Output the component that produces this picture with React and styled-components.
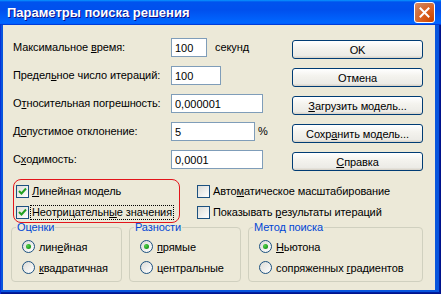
import React from 'react';
import styled, { createGlobalStyle } from 'styled-components';

const GlobalStyle = createGlobalStyle`
  html, body {
    margin: 0;
    padding: 0;
    background: #ece9d8;
  }
  * {
    box-sizing: border-box;
  }
`;

const Window = styled.div`
  width: 441px;
  height: 294px;
  display: flex;
  flex-direction: column;
  background: #0855dd;
  box-shadow: inset 1px 0 #0831d9, inset -1px -1px #00138c, inset -2px -2px #001ea0;
  font-family: 'Liberation Sans', Arial, sans-serif;
  font-size: 11px;
  letter-spacing: -0.1px;
  color: #000;
  overflow: hidden;
`;

const TitleBar = styled.div`
  height: 25px;
  flex-shrink: 0;
  display: flex;
  align-items: center;
  justify-content: space-between;
  padding: 0 6px 0 7px;
  background: linear-gradient(180deg, #0997ff 0%, #0053ee 8%, #0050ee 40%, #0066ff 88%, #0066ff 93%, #005bff 95%, #003dd7 96%, #003dd7 100%);
`;

const Title = styled.span`
  color: #fff;
  font-family: 'Liberation Sans', Arial, sans-serif;
  font-weight: bold;
  font-size: 13px;
  letter-spacing: 0;
  text-shadow: 1px 1px #0f1089;
`;

const CloseButton = styled.div`
  width: 21px;
  height: 21px;
  border: 1px solid #fff;
  border-radius: 3px;
  background: radial-gradient(circle at 90% 90%, #cc4600 0%, #dc6527 55%, #cd7546 70%, #e28a60 100%);
  display: flex;
  align-items: center;
  justify-content: center;
`;

const Client = styled.div`
  flex: 1;
  margin: 0 6px 4px 3px;
  background: #ece9d8;
  padding: 13px 12px 0 10px;
  display: flex;
  flex-direction: column;
`;

const FormGrid = styled.div`
  display: grid;
  grid-template-columns: 158px 1fr 131px;
  grid-auto-rows: 21px;
  row-gap: 7px;
`;

const FieldLabel = styled.label`
  display: block;
  height: 19px;
  line-height: 19px;
  white-space: nowrap;
`;

const FieldCell = styled.div`
  display: flex;
  align-items: flex-start;
  gap: ${p => p.$gap || 0}px;
`;

const Suffix = styled.span`
  height: 19px;
  line-height: 19px;
`;

const TextInput = styled.input`
  width: ${p => p.$w}px;
  height: 19px;
  border: 1px solid #7f9db9;
  background: #fff;
  padding: 0 3px;
  font-family: 'Liberation Sans', Arial, sans-serif;
  font-size: 11px;
  color: #000;
  outline: none;
`;

const Button = styled.button`
  height: 19px;
  margin-top: 2px;
  width: 131px;
  padding: 0;
  border: 1px solid #003c74;
  border-radius: 3px;
  background: linear-gradient(180deg, #fff 0%, #f4f3ee 40%, #ecebe6 86%, #d6d0c5 100%);
  font-family: 'Liberation Sans', Arial, sans-serif;
  font-size: 11px;
  letter-spacing: -0.1px;
  color: #000;
`;

const ChecksRow = styled.div`
  display: flex;
  margin-top: 8px;
`;

const Highlight = styled.div`
  width: 167px;
  border: 1px solid #e3151b;
  border-radius: 8px;
  padding: 4px 2px 2px 2px;
  display: flex;
  flex-direction: column;
  gap: 6px;
`;

const RightChecks = styled.div`
  margin-left: 17px;
  padding-top: 5px;
  display: flex;
  flex-direction: column;
  gap: 6px;
`;

const CheckRow = styled.div`
  height: 15px;
  display: flex;
  align-items: center;
`;

const Box = styled.span`
  width: 13px;
  height: 13px;
  flex-shrink: 0;
  border: 1px solid #1c5180;
  background: linear-gradient(135deg, #dcdcd7 0%, #fff 100%);
  display: flex;
  align-items: center;
  justify-content: center;
`;

const CheckText = styled.span`
  margin-left: 1px;
  padding: 0 1px;
  border: 1px dotted ${p => (p.$focus ? '#000' : 'transparent')};
  line-height: 13px;
  white-space: nowrap;
`;

const Groups = styled.div`
  display: flex;
  gap: 7px;
  margin: -2px 0 0 -2px;
`;

const Group = styled.fieldset`
  width: ${p => p.$w}px;
  margin: 0;
  padding: 5px 0 6px 10px;
  border: 1px solid #d0d0bf;
  border-radius: 4px;
  display: flex;
  flex-direction: column;
  gap: 6px;
`;

const Legend = styled.legend`
  margin-left: -6px;
  padding: 0 1px;
  color: #0046d5;
  line-height: 13px;
`;

const RadioRow = styled.div`
  height: 15px;
  display: flex;
  align-items: center;
  gap: 4px;
  white-space: nowrap;
`;

const Radio = styled.span`
  width: 13px;
  height: 13px;
  flex-shrink: 0;
  border-radius: 50%;
  border: 1px solid #1c5180;
  background: linear-gradient(135deg, #dcdcd7 0%, #fff 100%);
  display: flex;
  align-items: center;
  justify-content: center;

  &::after {
    content: '';
    display: ${p => (p.$on ? 'block' : 'none')};
    width: 5px;
    height: 5px;
    border-radius: 50%;
    background: radial-gradient(circle at 35% 35%, #55d34a 0%, #21a121 60%, #1a7f1a 100%);
  }
`;

const Check = () => (
  <svg width="9" height="9" viewBox="0 0 9 9">
    <path d="M1 4 L3.5 6.5 L8 1.5" fill="none" stroke="#21a121" strokeWidth="2" />
  </svg>
);

const CheckBox = ({ checked, focus, children }) => (
  <CheckRow>
    <Box>{checked && <Check />}</Box>
    <CheckText $focus={focus}>{children}</CheckText>
  </CheckRow>
);

const RadioItem = ({ on, children }) => (
  <RadioRow>
    <Radio $on={on} />
    <span>{children}</span>
  </RadioRow>
);

export default function App() {
  return (
    <>
      <GlobalStyle />
      <Window>
        <TitleBar>
          <Title>Параметры поиска решения</Title>
          <CloseButton>
            <svg width="11" height="11" viewBox="0 0 11 11">
              <path d="M1.5 1.5 L9.5 9.5 M9.5 1.5 L1.5 9.5" stroke="#fff" strokeWidth="2" strokeLinecap="square" />
            </svg>
          </CloseButton>
        </TitleBar>
        <Client>
          <FormGrid>
            <FieldLabel>Максимальное <u>в</u>ремя:</FieldLabel>
            <FieldCell $gap={8}>
              <TextInput $w={36} defaultValue="100" />
              <Suffix>секунд</Suffix>
            </FieldCell>
            <Button>OK</Button>

            <FieldLabel>Предел<u>ь</u>ное число итераций:</FieldLabel>
            <FieldCell>
              <TextInput $w={50} defaultValue="100" />
            </FieldCell>
            <Button>Отмена</Button>

            <FieldLabel>О<u>т</u>носительная погрешность:</FieldLabel>
            <FieldCell>
              <TextInput $w={92} defaultValue="0,000001" />
            </FieldCell>
            <Button><u>З</u>агрузить модель...</Button>

            <FieldLabel>Д<u>о</u>пустимое отклонение:</FieldLabel>
            <FieldCell $gap={3}>
              <TextInput $w={84} defaultValue="5" />
              <Suffix>%</Suffix>
            </FieldCell>
            <Button>Сохр<u>а</u>нить модель...</Button>

            <FieldLabel>С<u>х</u>одимость:</FieldLabel>
            <FieldCell>
              <TextInput $w={92} defaultValue="0,0001" />
            </FieldCell>
            <Button><u>С</u>правка</Button>
          </FormGrid>

          <ChecksRow>
            <Highlight>
              <CheckBox checked><u>Л</u>инейная модель</CheckBox>
              <CheckBox checked focus>Неотрицательн<u>ы</u>е значения</CheckBox>
            </Highlight>
            <RightChecks>
              <CheckBox>Авто<u>м</u>атическое масштабирование</CheckBox>
              <CheckBox>Показывать <u>р</u>езультаты итераций</CheckBox>
            </RightChecks>
          </ChecksRow>

          <Groups>
            <Group $w={111}>
              <Legend>Оценки</Legend>
              <RadioItem on>лин<u>е</u>йная</RadioItem>
              <RadioItem><u>к</u>вадратичная</RadioItem>
            </Group>
            <Group $w={112}>
              <Legend>Разности</Legend>
              <RadioItem on><u>п</u>рямые</RadioItem>
              <RadioItem>центральные</RadioItem>
            </Group>
            <Group $w={175}>
              <Legend>Метод поиска</Legend>
              <RadioItem on><u>Н</u>ьютона</RadioItem>
              <RadioItem>сопряженных <u>г</u>радиентов</RadioItem>
            </Group>
          </Groups>
        </Client>
      </Window>
    </>
  );
}
